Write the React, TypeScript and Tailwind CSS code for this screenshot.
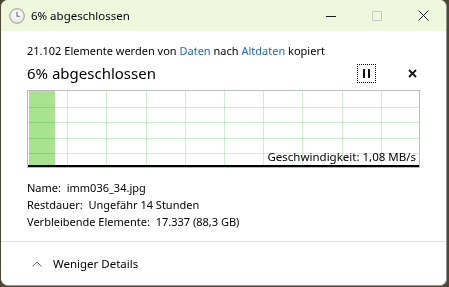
import React from "react";

const font = { fontFamily: '"Segoe UI", "Noto Sans", "Liberation Sans", sans-serif' };

const vLines = [67, 106, 146, 185, 224, 263, 302, 342, 381];
const hLines = [107, 122, 138, 153];

function ClockIcon() {
  return (
    <svg width="16" height="16" viewBox="0 0 16 16">
      <defs>
        <radialGradient id="clk" cx="50%" cy="40%" r="60%">
          <stop offset="0%" stopColor="#ffffff" />
          <stop offset="100%" stopColor="#e4e4e4" />
        </radialGradient>
      </defs>
      <circle cx="8" cy="8" r="7.3" fill="url(#clk)" stroke="#9a9a9a" strokeWidth="1" />
      <path d="M8 3.8V8.3H11" fill="none" stroke="#6a6a6a" strokeWidth="1.1" />
    </svg>
  );
}

function SpeedGraph() {
  return (
    <div className="relative h-[78px] border border-[#bcbcbc] bg-white">
      <div className="absolute left-[1px] top-0 h-full w-[26px] bg-[#a9e38e]" />
      {vLines.map((x) => (
        <div
          key={x}
          className="absolute top-0 h-full w-px bg-[#cdeed3]"
          style={{ left: x - 28 }}
        />
      ))}
      {hLines.map((y) => (
        <div
          key={y}
          className="absolute left-0 h-px w-full bg-[#cdeed3] mix-blend-multiply"
          style={{ top: y - 91 }}
        />
      ))}
      <div className="absolute bottom-0 left-0 h-[2px] w-full bg-black" />
      <div className="absolute bottom-[3px] right-[3px] text-[11.5px] leading-[14px] text-black">
        Geschwindigkeit: 1,08 MB/s
      </div>
    </div>
  );
}

export default function App() {
  return (
    <div className="h-[287px] w-[449px] overflow-hidden bg-[#4a4632]" style={font}>
      <div className="ml-[1px] flex h-[286px] w-[446px] flex-col overflow-hidden rounded-t-[7px] rounded-b-[7px] border-r border-b border-[#9a9a9a] bg-white">
        {/* title bar */}
        <div className="flex h-[31px] shrink-0 items-center bg-[#eff7dd]">
          <div className="ml-[8px] mr-[6px] flex items-center">
            <ClockIcon />
          </div>
          <span className="text-[11.5px] text-black">6% abgeschlossen</span>
          <div className="ml-auto flex h-full items-center">
            <div className="flex h-full w-[46px] items-center justify-center">
              <svg width="10" height="10" viewBox="0 0 10 10">
                <path d="M0 5.5H10" stroke="#1a1a1a" strokeWidth="1" />
              </svg>
            </div>
            <div className="flex h-full w-[46px] items-center justify-center">
              <svg width="10" height="10" viewBox="0 0 10 10">
                <rect x="0.5" y="0.5" width="9" height="9" fill="none" stroke="#c8c8c8" strokeWidth="1" />
              </svg>
            </div>
            <div className="flex h-full w-[46px] items-center justify-center">
              <svg width="11" height="11" viewBox="0 0 11 11">
                <path d="M0.5 0.5L10.5 10.5M10.5 0.5L0.5 10.5" stroke="#1a1a1a" strokeWidth="1" />
              </svg>
            </div>
          </div>
        </div>

        {/* body */}
        <div className="flex flex-col px-[26px] pt-[12px]">
          <div className="text-[11px] leading-[16px] text-black">
            21.102 Elemente werden von <span className="text-[#1a6bc0]">Daten</span> nach{" "}
            <span className="text-[#1a6bc0]">Altdaten</span> kopiert
          </div>
          <div className="mt-[4px] flex h-[20px] items-center">
            <span className="text-[15px] leading-[20px] text-black">6% abgeschlossen</span>
            <div className="ml-auto mr-[30px] flex h-[19px] w-[19px] items-center justify-center border border-dotted border-black">
              <svg width="7" height="9" viewBox="0 0 7 9">
                <rect x="0" y="0" width="2" height="9" fill="#111" />
                <rect x="5" y="0" width="2" height="9" fill="#111" />
              </svg>
            </div>
            <div className="mr-[2px] flex w-[12px] items-center justify-center">
              <svg width="9" height="9" viewBox="0 0 9 9">
                <path d="M1 1L8 8M8 1L1 8" stroke="#111" strokeWidth="1.8" />
              </svg>
            </div>
          </div>
          <div className="mt-[7px]">
            <SpeedGraph />
          </div>
          <div className="mt-[11px] flex flex-col text-[11px] leading-[17px] text-black">
            <div>Name:&nbsp; imm036_34.jpg</div>
            <div>Restdauer:&nbsp; Ungefähr 14 Stunden</div>
            <div>Verbleibende Elemente:&nbsp; 17.337 (88,3 GB)</div>
          </div>
        </div>

        <div className="mt-auto h-px w-full bg-[#e3e3e3]" />
        <div className="flex h-[43px] items-center pl-[31px]">
          <svg width="10" height="6" viewBox="0 0 10 6" className="mr-[11px]">
            <path d="M0.5 5.5L5 1L9.5 5.5" fill="none" stroke="#6a6a6a" strokeWidth="1" />
          </svg>
          <span className="text-[11.5px] text-black">Weniger Details</span>
        </div>
      </div>
    </div>
  );
}
